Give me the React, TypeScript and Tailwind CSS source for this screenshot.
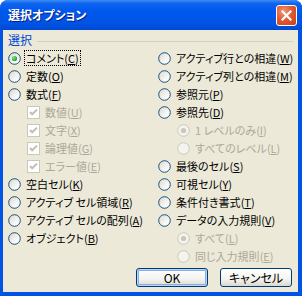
import React from 'react';

type Item = { label: string; key: string; kind: 'radio' | 'check'; indent?: boolean; checked?: boolean; disabled?: boolean; focus?: boolean };

const FONT = "[font-family:'Noto_Sans_CJK_JP','Noto_Sans',sans-serif] [font-feature-settings:'palt']";

const left: Item[] = [
    { label: 'コメント', key: 'C', kind: 'radio', checked: true, focus: true },
    { label: '定数', key: 'O', kind: 'radio' },
    { label: '数式', key: 'F', kind: 'radio' },
    { label: '数値', key: 'U', kind: 'check', indent: true, checked: true, disabled: true },
    { label: '文字', key: 'X', kind: 'check', indent: true, checked: true, disabled: true },
    { label: '論理値', key: 'G', kind: 'check', indent: true, checked: true, disabled: true },
    { label: 'エラー値', key: 'E', kind: 'check', indent: true, checked: true, disabled: true },
    { label: '空白セル', key: 'K', kind: 'radio' },
    { label: 'アクティブ セル領域', key: 'R', kind: 'radio' },
    { label: 'アクティブ セルの配列', key: 'A', kind: 'radio' },
    { label: 'オブジェクト', key: 'B', kind: 'radio' },
];

const right: Item[] = [
    { label: 'アクティブ行との相違', key: 'W', kind: 'radio' },
    { label: 'アクティブ列との相違', key: 'M', kind: 'radio' },
    { label: '参照元', key: 'P', kind: 'radio' },
    { label: '参照先', key: 'D', kind: 'radio' },
    { label: '1 レベルのみ', key: 'I', kind: 'radio', indent: true, checked: true, disabled: true },
    { label: 'すべてのレベル', key: 'L', kind: 'radio', indent: true, disabled: true },
    { label: '最後のセル', key: 'S', kind: 'radio' },
    { label: '可視セル', key: 'Y', kind: 'radio' },
    { label: '条件付き書式', key: 'T', kind: 'radio' },
    { label: 'データの入力規則', key: 'V', kind: 'radio' },
    { label: 'すべて', key: 'L', kind: 'radio', indent: true, checked: true, disabled: true },
    { label: '同じ入力規則', key: 'E', kind: 'radio', indent: true, disabled: true },
];

const RadioIcon = ({ checked, disabled }: { checked?: boolean; disabled?: boolean }) => (
    <svg width="13" height="13" viewBox="0 0 13 13" className="shrink-0">
        <defs>
            <linearGradient id="rfill" x1="0" y1="0" x2="1" y2="1">
                <stop offset="0" stopColor="#D8D6CB" />
                <stop offset="0.6" stopColor="#F6F6F3" />
                <stop offset="1" stopColor="#FFFFFF" />
            </linearGradient>
            <radialGradient id="rdot" cx="0.35" cy="0.35" r="0.7">
                <stop offset="0" stopColor="#7BE57B" />
                <stop offset="1" stopColor="#1F9D1F" />
            </radialGradient>
        </defs>
        <circle cx="6.5" cy="6.5" r="5.8" fill={disabled ? '#F4F3EE' : 'url(#rfill)'} stroke={disabled ? '#CAC8BB' : '#1C5180'} strokeWidth="1" />
        {checked && <circle cx="6.5" cy="6.5" r="2.6" fill={disabled ? '#CAC8BB' : 'url(#rdot)'} />}
    </svg>
);

const CheckIcon = ({ checked, disabled }: { checked?: boolean; disabled?: boolean }) => (
    <svg width="13" height="13" viewBox="0 0 13 13" className="shrink-0">
        <rect x="0.5" y="0.5" width="12" height="12" fill={disabled ? '#FFFFFF' : '#F4F4F0'} stroke={disabled ? '#CAC8BB' : '#1C5180'} />
        {checked && <path d="M3 6 L5.2 8.3 L10 3.6" fill="none" stroke={disabled ? '#C2BFB2' : '#21A121'} strokeWidth="2" />}
    </svg>
);

const Row = ({ item }: { item: Item }) => (
    <div className={`h-[18px] flex items-center ${item.indent ? 'pl-[19px]' : ''}`}>
        {item.kind === 'radio' ? <RadioIcon checked={item.checked} disabled={item.disabled} /> : <CheckIcon checked={item.checked} disabled={item.disabled} />}
        <span
            className={`ml-[3px] px-[1px] leading-[14px] whitespace-nowrap border border-dotted ${item.focus ? 'border-black' : 'border-transparent'} ${item.disabled ? 'text-[#ACA899]' : 'text-black'}`}
        >
            {item.label}(<span className="underline underline-offset-[1px]">{item.key}</span>)
        </span>
    </div>
);

export default function App() {
    return (
        <div className={`w-[302px] h-[296px] flex flex-col rounded-t-[8px] bg-[#0054E3] text-[11px] ${FONT}`}>
            <div className="h-[30px] shrink-0 flex items-center pl-[8px] pr-[5px] rounded-t-[8px] bg-[linear-gradient(to_bottom,#3D8CF6_0%,#0E63EE_12%,#0058EE_35%,#0055E6_75%,#0049D2_100%)]">
                <span className="flex-1 text-white font-bold text-[12px] [text-shadow:1px_1px_0_#0A1F83] pb-[1px]">選択オプション</span>
                <div className="w-[21px] h-[21px] mt-[1px] rounded-[3px] border border-white flex items-center justify-center bg-[radial-gradient(circle_at_35%_30%,#F29A7C_0%,#E25A33_45%,#C93E18_100%)]">
                    <svg width="11" height="11" viewBox="0 0 11 11">
                        <path d="M1.5 1.5 L9.5 9.5 M9.5 1.5 L1.5 9.5" stroke="#FFFFFF" strokeWidth="2.2" strokeLinecap="square" />
                    </svg>
                </div>
            </div>

            <div className="flex-1 ml-[3px] mr-[4px] mb-[4px] bg-[#ECE9D8] flex flex-col">
                <div className="h-[19px] flex items-center pl-[5px] pr-[5px]">
                    <span className="text-[#0046D5] text-[12px] leading-[14px]">選択</span>
                    <div className="flex-1 ml-[5px] mt-[3px] h-px bg-[#D0D0BF]" />
                </div>

                <div className="grid grid-cols-[150px_1fr] pl-[5px]">
                    <div className="flex flex-col">
                        {left.map((it, i) => (
                            <Row key={i} item={it} />
                        ))}
                    </div>
                    <div className="flex flex-col">
                        {right.map((it, i) => (
                            <Row key={i} item={it} />
                        ))}
                    </div>
                </div>

                <div className="flex justify-end gap-[12px] pr-[6px] mt-[3px]">
                    <button className="w-[72px] h-[19px] rounded-[3px] border border-[#003C74] bg-[linear-gradient(to_bottom,#FFFFFF_0%,#F3F3EF_60%,#DCD8CC_100%)] shadow-[inset_0_0_0_1px_#BCD4F6,inset_0_0_0_2px_#89ADE4] text-black text-[12px] leading-[14px]">
                        OK
                    </button>
                    <button className="w-[72px] h-[19px] rounded-[3px] border border-[#003C74] bg-[linear-gradient(to_bottom,#FFFFFF_0%,#F3F3EF_60%,#DCD8CC_100%)] text-black text-[12px] leading-[14px]">
                        キャンセル
                    </button>
                </div>
            </div>
        </div>
    );
}
